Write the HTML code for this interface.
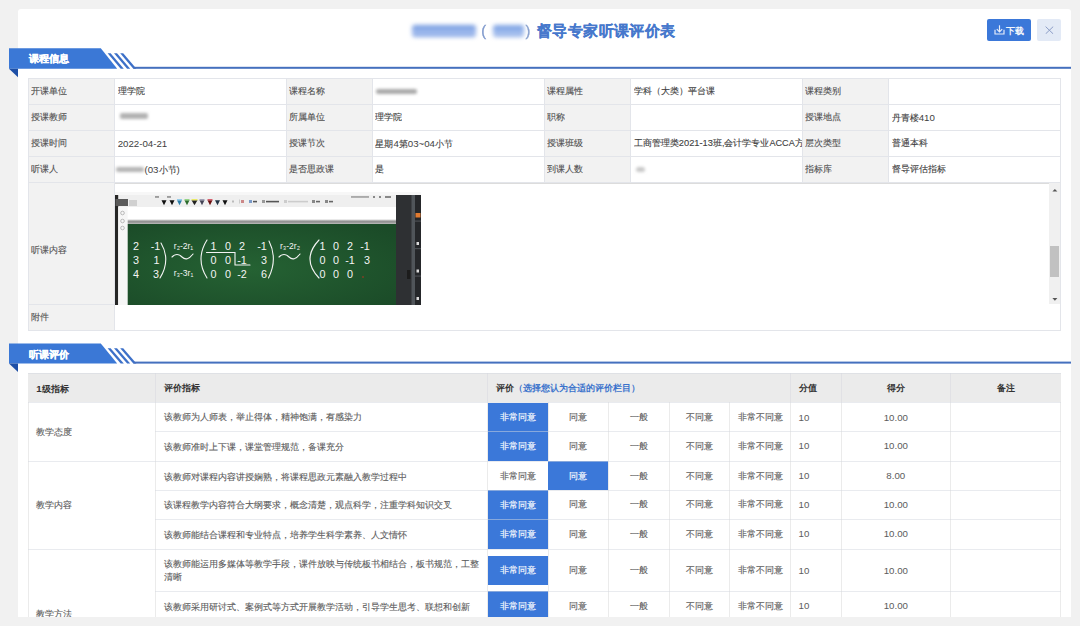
<!DOCTYPE html>
<html><head><meta charset="utf-8">
<style>
*{box-sizing:border-box;margin:0;padding:0}
html,body{width:1080px;height:626px;overflow:hidden;background:#f1f1f1;font-family:"Liberation Sans",sans-serif;}
#wrap{position:absolute;left:0;top:0;width:1080px;height:617px;overflow:hidden}
#panel{position:absolute;left:18px;top:9px;width:1053px;height:620px;background:#fff;border-radius:3px 3px 0 0}
.abs{position:absolute}
.t{position:absolute;white-space:nowrap;font-size:9px;-webkit-text-stroke:0.12px currentColor}
#title{left:537px;top:20px;font-size:15.4px;letter-spacing:0.38px;font-weight:bold;color:#4678cc;height:22px;line-height:22px}
.blur{display:inline-block;vertical-align:middle;filter:blur(1.6px);border-radius:4px}
#dl{position:absolute;left:987px;top:19px;width:44px;height:21.5px;background:#3b78d9;border-radius:2px;color:#fff;font-size:10px;font-weight:bold;line-height:21.5px}
#cls{position:absolute;left:1037px;top:19px;width:23.5px;height:21.5px;background:#e3eaf6;border-radius:2px}
.banner{position:absolute;left:0;width:1071px;height:30px}
.banner .txt{position:absolute;left:28.5px;top:4px;color:#fff;font-weight:bold;font-size:9.5px;line-height:14px;white-space:nowrap;-webkit-text-stroke:0.3px #fff}
table{border-collapse:collapse;table-layout:fixed;position:absolute}
td,th{border:1px solid #e4e6ec;font-size:9px;color:#555;overflow:hidden;white-space:nowrap;font-weight:normal}
#info td{padding:0 0 0 3px;}
#info td.l{background:#f2f2f2}
#eval td,#eval th{border-color:#ebebeb}
#eval th{background:#ebebeb;font-weight:bold;color:#333;text-align:left;padding-left:8px}
#eval td{color:#666;padding-left:8px}
#eval td.o{padding:0;text-align:center}
#eval td.sel{background:#3b78d9;color:#fff}
</style></head><body>
<div id="wrap">
  <div id="panel"></div>
  <div class="abs" style="left:412px;top:24.8px;width:64px;height:12px;background:linear-gradient(#6f97de,#93b1ea 45%,#a9c1ef 65%,#7a9ee2);filter:blur(1.9px);border-radius:3px"></div>
  <div class="abs" style="left:493px;top:24.8px;width:31px;height:12px;background:linear-gradient(#7a9fe2,#8fb0ea 45%,#b1c7f0 70%,#84a5e4);filter:blur(1.9px);border-radius:3px"></div>
  <div class="t" style="left:481.2px;top:21.5px;font-size:14.5px;line-height:18px;color:#7f99cc;-webkit-text-stroke:0.35px #7f99cc;filter:blur(0.3px)">(</div>
  <div class="t" style="left:525.6px;top:21.5px;font-size:14.5px;line-height:18px;color:#8aa2cf;-webkit-text-stroke:0.35px #8aa2cf;filter:blur(0.3px)">)</div>
  <div id="title" class="t">督导专家听课评价表</div>
  <div id="dl"><svg class="abs" style="left:7px;top:6px" width="11" height="10" viewBox="0 0 11 10"><path d="M1,4.8V9H10V4.8" fill="none" stroke="#e8eefa" stroke-width="1.15"/><path d="M5.5,0.3V6.6" stroke="#e8eefa" stroke-width="1.15"/><path d="M2.8,4.2L5.5,7L8.2,4.2" fill="none" stroke="#e8eefa" stroke-width="1.15"/></svg><span class="t" style="left:19px;top:1.5px;font-size:9px;line-height:21.5px;font-weight:bold;color:#f4f7fc;-webkit-text-stroke:0">下载</span></div>
  <div id="cls"><svg class="abs" style="left:7.5px;top:6.5px" width="9" height="8.5" viewBox="0 0 9 8.5"><path d="M0.6,0.6L8.2,7.9M8.2,0.6L0.6,7.9" stroke="#8c9dc6" stroke-width="1"/></svg></div>

  <!-- banner 1 -->
  <div class="banner" style="top:48px">
    <svg width="1071" height="30" style="position:absolute;left:0;top:0">
      <polygon points="9,0.3 100.8,0.3 117.2,20.75 9,20.75" fill="#3b78d6"/>
      <polygon points="9,20.75 18,20.75 18,29.2" fill="#1e4fa6"/>
      <polygon points="107.6,5.3 110.6,5.3 123.8,20.75 120.7,20.75" fill="#3d70c8"/>
      <polygon points="114,5.3 117,5.3 130.2,20.75 127.1,20.75" fill="#3d70c8"/>
      <polygon points="120.2,5.3 123.2,5.3 136.4,20.75 133.3,20.75" fill="#3d70c8"/>
      <rect x="133.5" y="18.8" width="939" height="2" fill="#4570be"/>
    </svg>
    <div class="txt">课程信息</div>
  </div>

  <!-- banner 2 -->
  <div class="banner" style="top:343px">
    <svg width="1071" height="30" style="position:absolute;left:0;top:0">
      <polygon points="9,0.6 100.8,0.6 117.2,20.6 9,20.6" fill="#3b78d6"/>
      <polygon points="9,20.6 18,20.6 18,29" fill="#1e4fa6"/>
      <polygon points="107.6,5.3 110.6,5.3 123.8,20.6 120.7,20.6" fill="#3d70c8"/>
      <polygon points="114,5.3 117,5.3 130.2,20.6 127.1,20.6" fill="#3d70c8"/>
      <polygon points="120.2,5.3 123.2,5.3 136.4,20.6 133.3,20.6" fill="#3d70c8"/>
      <rect x="133.5" y="18.6" width="939" height="2" fill="#4570be"/>
    </svg>
    <div class="txt" style="top:4.5px">听课评价</div>
  </div>

  <!-- INFO TABLE -->
<div class="abs" style="left:27.8px;top:77.5px;width:86.4px;height:26.299999999999997px;background:#f2f2f2"></div>
<div class="abs" style="left:285.6px;top:77.5px;width:86.29999999999995px;height:26.299999999999997px;background:#f2f2f2"></div>
<div class="abs" style="left:543.6px;top:77.5px;width:86.69999999999993px;height:26.299999999999997px;background:#f2f2f2"></div>
<div class="abs" style="left:801.7px;top:77.5px;width:86.5px;height:26.299999999999997px;background:#f2f2f2"></div>
<div class="abs" style="left:27.8px;top:103.8px;width:86.4px;height:26.000000000000014px;background:#f2f2f2"></div>
<div class="abs" style="left:285.6px;top:103.8px;width:86.29999999999995px;height:26.000000000000014px;background:#f2f2f2"></div>
<div class="abs" style="left:543.6px;top:103.8px;width:86.69999999999993px;height:26.000000000000014px;background:#f2f2f2"></div>
<div class="abs" style="left:801.7px;top:103.8px;width:86.5px;height:26.000000000000014px;background:#f2f2f2"></div>
<div class="abs" style="left:27.8px;top:129.8px;width:86.4px;height:26.0px;background:#f2f2f2"></div>
<div class="abs" style="left:285.6px;top:129.8px;width:86.29999999999995px;height:26.0px;background:#f2f2f2"></div>
<div class="abs" style="left:543.6px;top:129.8px;width:86.69999999999993px;height:26.0px;background:#f2f2f2"></div>
<div class="abs" style="left:801.7px;top:129.8px;width:86.5px;height:26.0px;background:#f2f2f2"></div>
<div class="abs" style="left:27.8px;top:155.8px;width:86.4px;height:26.0px;background:#f2f2f2"></div>
<div class="abs" style="left:285.6px;top:155.8px;width:86.29999999999995px;height:26.0px;background:#f2f2f2"></div>
<div class="abs" style="left:543.6px;top:155.8px;width:86.69999999999993px;height:26.0px;background:#f2f2f2"></div>
<div class="abs" style="left:801.7px;top:155.8px;width:86.5px;height:26.0px;background:#f2f2f2"></div>
<div class="abs" style="left:27.8px;top:181.8px;width:86.4px;height:122.09999999999997px;background:#f2f2f2"></div>
<div class="abs" style="left:27.8px;top:303.9px;width:86.4px;height:26.100000000000023px;background:#f2f2f2"></div>
<div class="abs" style="left:27.8px;top:77.5px;width:1033.0px;height:1px;background:#e3e5ea"></div>
<div class="abs" style="left:27.8px;top:103.8px;width:1033.0px;height:1px;background:#e3e5ea"></div>
<div class="abs" style="left:27.8px;top:129.8px;width:1033.0px;height:1px;background:#e3e5ea"></div>
<div class="abs" style="left:27.8px;top:155.8px;width:1033.0px;height:1px;background:#e3e5ea"></div>
<div class="abs" style="left:27.8px;top:181.8px;width:1033.0px;height:1px;background:#e3e5ea"></div>
<div class="abs" style="left:27.8px;top:303.9px;width:87.4px;height:1px;background:#e3e5ea"></div>
<div class="abs" style="left:27.8px;top:330.0px;width:1033.0px;height:1px;background:#e3e5ea"></div>
<div class="abs" style="left:27.8px;top:77.5px;width:1px;height:253.5px;background:#e3e5ea"></div>
<div class="abs" style="left:114.2px;top:77.5px;width:1px;height:253.5px;background:#e3e5ea"></div>
<div class="abs" style="left:285.6px;top:77.5px;width:1px;height:104.30000000000001px;background:#e3e5ea"></div>
<div class="abs" style="left:371.9px;top:77.5px;width:1px;height:104.30000000000001px;background:#e3e5ea"></div>
<div class="abs" style="left:543.6px;top:77.5px;width:1px;height:104.30000000000001px;background:#e3e5ea"></div>
<div class="abs" style="left:630.3px;top:77.5px;width:1px;height:104.30000000000001px;background:#e3e5ea"></div>
<div class="abs" style="left:801.7px;top:77.5px;width:1px;height:104.30000000000001px;background:#e3e5ea"></div>
<div class="abs" style="left:888.2px;top:77.5px;width:1px;height:104.30000000000001px;background:#e3e5ea"></div>
<div class="abs" style="left:1059.8px;top:77.5px;width:1px;height:253.5px;background:#e3e5ea"></div>
<div class="t" style="left:31.3px;top:79px;height:25.299999999999997px;line-height:25.299999999999997px;color:#505050;max-width:82.9px;overflow:hidden">开课单位</div>
<div class="t" style="left:117.7px;top:79px;height:25.299999999999997px;line-height:25.299999999999997px;color:#3e3e3e;max-width:167.90000000000003px;overflow:hidden">理学院</div>
<div class="t" style="left:289.1px;top:79px;height:25.299999999999997px;line-height:25.299999999999997px;color:#505050;max-width:82.79999999999995px;overflow:hidden">课程名称</div>
<div class="abs" style="left:375.5px;top:88.5px;width:41px;height:5.5px;background:#aaaaaa;filter:blur(1.5px);border-radius:2px"></div>
<div class="t" style="left:547.1px;top:79px;height:25.299999999999997px;line-height:25.299999999999997px;color:#505050;max-width:83.19999999999993px;overflow:hidden">课程属性</div>
<div class="t" style="left:633.8px;top:79px;height:25.299999999999997px;line-height:25.299999999999997px;color:#3e3e3e;max-width:167.9000000000001px;overflow:hidden">学科（大类）平台课</div>
<div class="t" style="left:805.2px;top:79px;height:25.299999999999997px;line-height:25.299999999999997px;color:#505050;max-width:83.0px;overflow:hidden">课程类别</div>
<div class="t" style="left:31.3px;top:105.3px;height:25.000000000000014px;line-height:25.000000000000014px;color:#505050;max-width:82.9px;overflow:hidden">授课教师</div>
<div class="abs" style="left:119.5px;top:113.3px;width:28px;height:5.5px;background:#b2b2b2;filter:blur(1.5px);border-radius:2px"></div>
<div class="t" style="left:289.1px;top:105.3px;height:25.000000000000014px;line-height:25.000000000000014px;color:#505050;max-width:82.79999999999995px;overflow:hidden">所属单位</div>
<div class="t" style="left:375.4px;top:105.3px;height:25.000000000000014px;line-height:25.000000000000014px;color:#3e3e3e;max-width:168.20000000000005px;overflow:hidden">理学院</div>
<div class="t" style="left:547.1px;top:105.3px;height:25.000000000000014px;line-height:25.000000000000014px;color:#505050;max-width:83.19999999999993px;overflow:hidden">职称</div>
<div class="t" style="left:805.2px;top:105.3px;height:25.000000000000014px;line-height:25.000000000000014px;color:#505050;max-width:83.0px;overflow:hidden">授课地点</div>
<div class="t" style="left:891.7px;top:105.3px;height:25.000000000000014px;line-height:25.000000000000014px;color:#3e3e3e;max-width:168.0999999999999px;overflow:hidden">丹青楼<span style="font-size:9.7px;-webkit-text-stroke:0">410</span></div>
<div class="t" style="left:31.3px;top:131.3px;height:25.0px;line-height:25.0px;color:#505050;max-width:82.9px;overflow:hidden">授课时间</div>
<div class="t" style="left:117.7px;top:131.3px;height:25.0px;line-height:25.0px;color:#3e3e3e;max-width:167.90000000000003px;overflow:hidden"><span style="font-size:9.7px;-webkit-text-stroke:0">2022-04-21</span></div>
<div class="t" style="left:289.1px;top:131.3px;height:25.0px;line-height:25.0px;color:#505050;max-width:82.79999999999995px;overflow:hidden">授课节次</div>
<div class="t" style="left:375.4px;top:131.3px;height:25.0px;line-height:25.0px;color:#3e3e3e;max-width:168.20000000000005px;overflow:hidden">星期<span style="font-size:9.7px;-webkit-text-stroke:0">4</span>第<span style="font-size:9.7px;-webkit-text-stroke:0">03~04</span>小节</div>
<div class="t" style="left:547.1px;top:131.3px;height:25.0px;line-height:25.0px;color:#505050;max-width:83.19999999999993px;overflow:hidden">授课班级</div>
<div class="t" style="left:633.8px;top:131.3px;height:25.0px;line-height:25.0px;color:#3e3e3e;max-width:167.9000000000001px;overflow:hidden">工商管理类<span style="font-size:9.3px">2021-13</span>班,会计学专业<span style="font-size:9.1px">ACCA</span>方</div>
<div class="t" style="left:805.2px;top:131.3px;height:25.0px;line-height:25.0px;color:#505050;max-width:83.0px;overflow:hidden">层次类型</div>
<div class="t" style="left:891.7px;top:131.3px;height:25.0px;line-height:25.0px;color:#3e3e3e;max-width:168.0999999999999px;overflow:hidden">普通本科</div>
<div class="t" style="left:31.3px;top:157.3px;height:25.0px;line-height:25.0px;color:#505050;max-width:82.9px;overflow:hidden">听课人</div>
<div class="abs" style="left:116.0px;top:166.5px;width:28px;height:5.5px;background:#b4b4b4;filter:blur(1.4px);border-radius:2px"></div>
<div class="t" style="left:144.5px;top:157.3px;height:25.0px;line-height:25.0px;color:#3e3e3e"><span style="font-size:9.7px;-webkit-text-stroke:0">(03</span>小节<span style="font-size:9.7px;-webkit-text-stroke:0">)</span></div>
<div class="t" style="left:289.1px;top:157.3px;height:25.0px;line-height:25.0px;color:#505050;max-width:82.79999999999995px;overflow:hidden">是否思政课</div>
<div class="t" style="left:375.4px;top:157.3px;height:25.0px;line-height:25.0px;color:#3e3e3e;max-width:168.20000000000005px;overflow:hidden">是</div>
<div class="t" style="left:547.1px;top:157.3px;height:25.0px;line-height:25.0px;color:#505050;max-width:83.19999999999993px;overflow:hidden">到课人数</div>
<div class="abs" style="left:636.0px;top:166.5px;width:8.5px;height:5.5px;background:#c8c8c8;filter:blur(1.6px);border-radius:3px"></div>
<div class="t" style="left:805.2px;top:157.3px;height:25.0px;line-height:25.0px;color:#505050;max-width:83.0px;overflow:hidden">指标库</div>
<div class="t" style="left:891.7px;top:157.3px;height:25.0px;line-height:25.0px;color:#3e3e3e;max-width:168.0999999999999px;overflow:hidden">督导评估指标</div>
<div class="t" style="left:31.3px;top:189.5px;height:121.09999999999997px;line-height:121.09999999999997px;color:#555">听课内容</div>
<div class="t" style="left:31.3px;top:305.4px;height:25.100000000000023px;line-height:25.100000000000023px;color:#555">附件</div>
<div class="abs" style="left:115.2px;top:182.7px;width:944.5999999999999px;height:1px;background:#dcdcdc"></div>
<div class="abs" style="left:1048.8px;top:183.1px;width:11px;height:120.8px;background:#f0f0f0"></div>
<svg class="abs" style="left:1049px;top:186px" width="12" height="118"><path d="M3.4,5.6H8.4L5.9,2.9z" fill="#555"/><path d="M3.4,112H8.4L5.9,114.7z" fill="#555"/></svg>
<div class="abs" style="left:1049.8px;top:245.5px;width:9px;height:31px;background:#c1c1c1"></div>
<svg class="abs" style="left:114.5px;top:192px" width="306" height="113" viewBox="0 0 306 113">
<defs>
<radialGradient id="gb" cx="0.45" cy="0.55" r="0.7">
<stop offset="0" stop-color="#256233"/><stop offset="1" stop-color="#1b4b28"/></radialGradient>
<linearGradient id="bar" x1="0" y1="0" x2="0" y2="1"><stop offset="0" stop-color="#d8d8d8"/><stop offset="0.5" stop-color="#8a8a8a"/><stop offset="1" stop-color="#bdbdbd"/></linearGradient>
</defs>
<rect x="0" y="0" width="307" height="113" fill="#f7f7f7"/>
<rect x="0" y="3" width="281" height="12" fill="#efefef"/>
<rect x="0" y="3" width="3.2" height="110" fill="#262626"/>
<rect x="0.5" y="7" width="12.5" height="7" fill="#5a5a5a"/>
<rect x="14" y="8" width="8" height="6" fill="#d0d0d0"/>
<g fill="#111" transform="translate(0,1.8)">
<path d="M46.5,6.5h5l-2.5,5z"/><path d="M54.5,6.5h5l-2.5,5z"/><path d="M62,6.5h5l-2.5,5z" fill="#2a7da8"/><path d="M69.5,6.5h5l-2.5,5z" fill="#2c6b2c"/><path d="M76.5,6.5h6l-3,5z" fill="#222"/><path d="M84.5,6.5h5l-2.5,5z" fill="#445"/><path d="M92.5,6.5h5l-2.5,5z" fill="#6a1010"/><path d="M100,6.5h5l-2.5,5z" fill="#234"/><path d="M107.5,6.5h5l-2.5,5z"/>
<rect x="76.5" y="5.3" width="6" height="1.3" fill="#e8e85a"/>
<rect x="62" y="5.3" width="5" height="1.3" fill="#8cc8e8"/>
<rect x="69.5" y="5.3" width="5" height="1.3" fill="#8ad07a"/>
<rect x="84.5" y="5.3" width="5" height="1.3" fill="#9a9ab0"/>
<rect x="92.5" y="5.3" width="5" height="1.3" fill="#d05060"/>
</g>
<g fill="#888"><rect x="40" y="4.2" width="4" height="1.5"/><rect x="52" y="4.2" width="4" height="1.5"/><rect x="117" y="8.5" width="2" height="2" fill="#bbb"/><rect x="124" y="7.5" width="1" height="4" fill="#ccc"/><rect x="126" y="8" width="3" height="3" fill="#c88"/><rect x="134" y="8" width="3" height="3" fill="#7a9ac8"/><rect x="138" y="8.8" width="4" height="1.6" fill="#555"/><rect x="147" y="8" width="3" height="3" fill="#999"/><rect x="151" y="8.8" width="13" height="1.6" fill="#555"/><rect x="169" y="8" width="3" height="3" fill="#ccc"/><rect x="173" y="8.8" width="20" height="1.6" fill="#ccc"/><rect x="197" y="8" width="3" height="3" fill="#888"/><rect x="201" y="8.8" width="4" height="1.6" fill="#666"/><rect x="210" y="8" width="3" height="3" fill="#888"/><rect x="214" y="8.8" width="4" height="1.6" fill="#666"/>
<rect x="236" y="4.2" width="18" height="1.5" fill="#999"/><rect x="258" y="4" width="2" height="2"/><rect x="264" y="4" width="2" height="2"/><rect x="270" y="4" width="6" height="2"/></g>
<rect x="3.2" y="15" width="9.5" height="98" fill="#f6f6f6"/>
<g fill="none" stroke="#aaa" stroke-width="0.8"><circle cx="7.5" cy="21" r="1.8"/><circle cx="7.5" cy="29" r="1.8"/><circle cx="7.5" cy="36" r="1.8"/></g>
<rect x="12.7" y="15" width="268.3" height="12.5" fill="#ffffff"/>
<rect x="12.7" y="27.5" width="268.3" height="4.5" fill="url(#bar)"/>
<rect x="12.7" y="32" width="268.3" height="81" fill="url(#gb)"/>
<rect x="281" y="3" width="26" height="110" fill="#2e3033"/>
<rect x="296.5" y="3" width="3.5" height="110" fill="#50555a"/>
<rect x="300" y="3" width="7" height="110" fill="#25272a"/>
<g fill="#4a4e52"><rect x="300" y="28.5" width="7" height="1.2"/><rect x="300" y="56" width="7" height="1.2"/><rect x="300" y="83.5" width="7" height="1.2"/></g>
<rect x="300.5" y="21" width="5" height="4.5" fill="#e07a30"/>
<g fill="#ddd"><rect x="301.5" y="50" width="2.5" height="3"/><rect x="301.5" y="77.5" width="2.5" height="3"/><rect x="301.5" y="105" width="2.5" height="3"/></g>
<rect x="292" y="78" width="3.5" height="9" fill="#1c1c1c"/>
<g fill="#f4f4f4" font-family="Liberation Sans" font-size="10.8" text-anchor="middle">
<text x="21" y="57.5">2</text><text x="40.5" y="57.5">-1</text>
<text x="21" y="71.8">3</text><text x="41.5" y="71.8">1</text>
<text x="21" y="86">4</text><text x="41" y="86">3</text>
<text x="98.5" y="57.5">1</text><text x="113" y="57.5">0</text><text x="127" y="57.5">2</text><text x="147" y="57.5">-1</text>
<text x="98.5" y="71.8">0</text><text x="113" y="71.8">0</text><text x="127" y="71.8">-1</text><text x="149" y="71.8">3</text>
<text x="98.5" y="86">0</text><text x="113" y="86">0</text><text x="127" y="86">-2</text><text x="149" y="86">6</text>
<text x="207.5" y="57.5">1</text><text x="221" y="57.5">0</text><text x="235" y="57.5">2</text><text x="250" y="57.5">-1</text>
<text x="207.5" y="71.8">0</text><text x="221" y="71.8">0</text><text x="235" y="71.8">-1</text><text x="252" y="71.8">3</text>
<text x="207.5" y="86">0</text><text x="221" y="86">0</text><text x="235" y="86">0</text>
</g>
<g fill="#f4f4f4" font-family="Liberation Sans" font-size="8.5" text-anchor="middle">
<text x="68.5" y="57">r₂-2r₁</text><text x="68.5" y="84">r₃-3r₁</text><text x="175" y="57">r₃-2r₂</text>
</g>
<g fill="none" stroke="#f4f4f4" stroke-width="1.1" stroke-linecap="round">
<path d="M46,51 Q56,68 45,86"/>
<path d="M92,48 Q80,67 92,86"/>
<path d="M154,49 Q163,67 153.5,86"/>
<path d="M204,48 Q186,67 204,86"/>
<path d="M57,65 q5,-5 10,0 q5,5 11,-3"/>
<path d="M164,65 q5,-5 10,0 q5,5 11,-3"/>
<path d="M91.5,60.5 H120 V73 H135"/>
</g>
<circle cx="248" cy="85" r="0.8" fill="#c03020"/>
</svg>

<!-- EVAL TABLE -->
<div class="abs" style="left:27.8px;top:372.5px;width:1032.5px;height:29.69999999999999px;background:#ebebeb"></div>
<div class="abs" style="left:27.8px;top:372.5px;width:1px;height:277px;background:#ebebeb"></div>
<div class="abs" style="left:154.8px;top:372.5px;width:1px;height:277px;background:#ebebeb"></div>
<div class="abs" style="left:487.0px;top:372.5px;width:1px;height:277px;background:#ebebeb"></div>
<div class="abs" style="left:547.5px;top:402.2px;width:1px;height:247.3px;background:#ebebeb"></div>
<div class="abs" style="left:607.8px;top:402.2px;width:1px;height:247.3px;background:#ebebeb"></div>
<div class="abs" style="left:668.5px;top:402.2px;width:1px;height:247.3px;background:#ebebeb"></div>
<div class="abs" style="left:729.0px;top:402.2px;width:1px;height:247.3px;background:#ebebeb"></div>
<div class="abs" style="left:790.0px;top:372.5px;width:1px;height:277px;background:#ebebeb"></div>
<div class="abs" style="left:840.8px;top:372.5px;width:1px;height:277px;background:#ebebeb"></div>
<div class="abs" style="left:949.8px;top:372.5px;width:1px;height:277px;background:#ebebeb"></div>
<div class="abs" style="left:1060.3px;top:372.5px;width:1px;height:277px;background:#ebebeb"></div>
<div class="abs" style="left:154.8px;top:372.5px;width:1px;height:29.69999999999999px;background:#e1e1e5"></div>
<div class="abs" style="left:487.0px;top:372.5px;width:1px;height:29.69999999999999px;background:#e1e1e5"></div>
<div class="abs" style="left:790.0px;top:372.5px;width:1px;height:29.69999999999999px;background:#e1e1e5"></div>
<div class="abs" style="left:840.8px;top:372.5px;width:1px;height:29.69999999999999px;background:#e1e1e5"></div>
<div class="abs" style="left:949.8px;top:372.5px;width:1px;height:29.69999999999999px;background:#e1e1e5"></div>
<div class="t" style="left:36.3px;top:374px;height:29.69999999999999px;line-height:29.69999999999999px;font-weight:bold;color:#333;-webkit-text-stroke:0"><span style="font-size:9.7px;-webkit-text-stroke:0">1</span>级指标</div>
<div class="t" style="left:164.1px;top:374px;height:29.69999999999999px;line-height:29.69999999999999px;font-weight:bold;color:#333;-webkit-text-stroke:0">评价指标</div>
<div class="t" style="left:495.8px;top:374px;height:29.69999999999999px;line-height:29.69999999999999px;font-weight:bold;color:#333;-webkit-text-stroke:0">评价<span style="color:#3b73cc;font-weight:bold">（选择您认为合适的评价栏目）</span></div>
<div class="t" style="left:798.5px;top:374px;height:29.69999999999999px;line-height:29.69999999999999px;font-weight:bold;color:#333;-webkit-text-stroke:0">分值</div>
<div class="t" style="left:841.3px;top:374px;height:29.69999999999999px;line-height:29.69999999999999px;font-weight:bold;color:#333;-webkit-text-stroke:0;width:109.0px;text-align:center">得分</div>
<div class="t" style="left:950.3px;top:374px;height:29.69999999999999px;line-height:29.69999999999999px;font-weight:bold;color:#333;-webkit-text-stroke:0;width:110.5px;text-align:center">备注</div>
<div class="t" style="left:36.3px;top:402.7px;height:58.30000000000001px;line-height:58.30000000000001px;color:#5c5c5c">教学态度</div>
<div class="t" style="left:36.3px;top:461.0px;height:88.0px;line-height:88.0px;color:#5c5c5c">教学内容</div>
<div class="t" style="left:36.3px;top:549.0px;height:131.0px;line-height:131.0px;color:#5c5c5c">教学方法</div>
<div class="t" style="left:164.3px;top:404.2px;height:27.600000000000023px;line-height:27.600000000000023px;color:#5c5c5c">该教师为人师表，举止得体，精神饱满，有感染力</div>
<div class="abs" style="left:487.5px;top:402.7px;width:60.5px;height:28.600000000000023px;background:#3b78d9"></div>
<div class="t" style="left:487.5px;top:403.2px;height:28.600000000000023px;line-height:28.600000000000023px;color:#fff;width:60.5px;text-align:center">非常同意</div>
<div class="t" style="left:548px;top:403.7px;height:27.600000000000023px;line-height:27.600000000000023px;color:#5c5c5c;width:60.299999999999955px;text-align:center">同意</div>
<div class="t" style="left:608.3px;top:403.7px;height:27.600000000000023px;line-height:27.600000000000023px;color:#5c5c5c;width:60.700000000000045px;text-align:center">一般</div>
<div class="t" style="left:669px;top:403.7px;height:27.600000000000023px;line-height:27.600000000000023px;color:#5c5c5c;width:60.5px;text-align:center">不同意</div>
<div class="t" style="left:729.5px;top:403.7px;height:27.600000000000023px;line-height:27.600000000000023px;color:#5c5c5c;width:61.0px;text-align:center">非常不同意</div>
<div class="t" style="left:798.5px;top:403.7px;height:27.600000000000023px;line-height:27.600000000000023px;color:#5c5c5c"><span style="font-size:9.7px;-webkit-text-stroke:0">10</span></div>
<div class="t" style="left:841.3px;top:403.7px;height:27.600000000000023px;line-height:27.600000000000023px;color:#5c5c5c;width:109.0px;text-align:center"><span style="font-size:9.7px;-webkit-text-stroke:0">10.00</span></div>
<div class="t" style="left:164.3px;top:432.8px;height:28.69999999999999px;line-height:28.69999999999999px;color:#5c5c5c">该教师准时上下课，课堂管理规范，备课充分</div>
<div class="abs" style="left:487.5px;top:431.3px;width:60.5px;height:29.69999999999999px;background:#3b78d9"></div>
<div class="t" style="left:487.5px;top:431.8px;height:29.69999999999999px;line-height:29.69999999999999px;color:#fff;width:60.5px;text-align:center">非常同意</div>
<div class="t" style="left:548px;top:432.3px;height:28.69999999999999px;line-height:28.69999999999999px;color:#5c5c5c;width:60.299999999999955px;text-align:center">同意</div>
<div class="t" style="left:608.3px;top:432.3px;height:28.69999999999999px;line-height:28.69999999999999px;color:#5c5c5c;width:60.700000000000045px;text-align:center">一般</div>
<div class="t" style="left:669px;top:432.3px;height:28.69999999999999px;line-height:28.69999999999999px;color:#5c5c5c;width:60.5px;text-align:center">不同意</div>
<div class="t" style="left:729.5px;top:432.3px;height:28.69999999999999px;line-height:28.69999999999999px;color:#5c5c5c;width:61.0px;text-align:center">非常不同意</div>
<div class="t" style="left:798.5px;top:432.3px;height:28.69999999999999px;line-height:28.69999999999999px;color:#5c5c5c"><span style="font-size:9.7px;-webkit-text-stroke:0">10</span></div>
<div class="t" style="left:841.3px;top:432.3px;height:28.69999999999999px;line-height:28.69999999999999px;color:#5c5c5c;width:109.0px;text-align:center"><span style="font-size:9.7px;-webkit-text-stroke:0">10.00</span></div>
<div class="t" style="left:164.3px;top:462.5px;height:28.30000000000001px;line-height:28.30000000000001px;color:#5c5c5c">该教师对课程内容讲授娴熟，将课程思政元素融入教学过程中</div>
<div class="t" style="left:487.5px;top:462.0px;height:28.30000000000001px;line-height:28.30000000000001px;color:#5c5c5c;width:60.5px;text-align:center">非常同意</div>
<div class="abs" style="left:548.0px;top:461.0px;width:60.299999999999955px;height:29.30000000000001px;background:#3b78d9"></div>
<div class="t" style="left:548px;top:461.5px;height:29.30000000000001px;line-height:29.30000000000001px;color:#fff;width:60.299999999999955px;text-align:center">同意</div>
<div class="t" style="left:608.3px;top:462.0px;height:28.30000000000001px;line-height:28.30000000000001px;color:#5c5c5c;width:60.700000000000045px;text-align:center">一般</div>
<div class="t" style="left:669px;top:462.0px;height:28.30000000000001px;line-height:28.30000000000001px;color:#5c5c5c;width:60.5px;text-align:center">不同意</div>
<div class="t" style="left:729.5px;top:462.0px;height:28.30000000000001px;line-height:28.30000000000001px;color:#5c5c5c;width:61.0px;text-align:center">非常不同意</div>
<div class="t" style="left:798.5px;top:462.0px;height:28.30000000000001px;line-height:28.30000000000001px;color:#5c5c5c"><span style="font-size:9.7px;-webkit-text-stroke:0">10</span></div>
<div class="t" style="left:841.3px;top:462.0px;height:28.30000000000001px;line-height:28.30000000000001px;color:#5c5c5c;width:109.0px;text-align:center"><span style="font-size:9.7px;-webkit-text-stroke:0">8.00</span></div>
<div class="t" style="left:164.3px;top:491.8px;height:27.900000000000034px;line-height:27.900000000000034px;color:#5c5c5c">该课程教学内容符合大纲要求，概念清楚，观点科学，注重学科知识交叉</div>
<div class="abs" style="left:487.5px;top:490.3px;width:60.5px;height:28.900000000000034px;background:#3b78d9"></div>
<div class="t" style="left:487.5px;top:490.8px;height:28.900000000000034px;line-height:28.900000000000034px;color:#fff;width:60.5px;text-align:center">非常同意</div>
<div class="t" style="left:548px;top:491.3px;height:27.900000000000034px;line-height:27.900000000000034px;color:#5c5c5c;width:60.299999999999955px;text-align:center">同意</div>
<div class="t" style="left:608.3px;top:491.3px;height:27.900000000000034px;line-height:27.900000000000034px;color:#5c5c5c;width:60.700000000000045px;text-align:center">一般</div>
<div class="t" style="left:669px;top:491.3px;height:27.900000000000034px;line-height:27.900000000000034px;color:#5c5c5c;width:60.5px;text-align:center">不同意</div>
<div class="t" style="left:729.5px;top:491.3px;height:27.900000000000034px;line-height:27.900000000000034px;color:#5c5c5c;width:61.0px;text-align:center">非常不同意</div>
<div class="t" style="left:798.5px;top:491.3px;height:27.900000000000034px;line-height:27.900000000000034px;color:#5c5c5c"><span style="font-size:9.7px;-webkit-text-stroke:0">10</span></div>
<div class="t" style="left:841.3px;top:491.3px;height:27.900000000000034px;line-height:27.900000000000034px;color:#5c5c5c;width:109.0px;text-align:center"><span style="font-size:9.7px;-webkit-text-stroke:0">10.00</span></div>
<div class="t" style="left:164.3px;top:520.7px;height:28.799999999999955px;line-height:28.799999999999955px;color:#5c5c5c">该教师能结合课程和专业特点，培养学生科学素养、人文情怀</div>
<div class="abs" style="left:487.5px;top:519.2px;width:60.5px;height:29.799999999999955px;background:#3b78d9"></div>
<div class="t" style="left:487.5px;top:519.7px;height:29.799999999999955px;line-height:29.799999999999955px;color:#fff;width:60.5px;text-align:center">非常同意</div>
<div class="t" style="left:548px;top:520.2px;height:28.799999999999955px;line-height:28.799999999999955px;color:#5c5c5c;width:60.299999999999955px;text-align:center">同意</div>
<div class="t" style="left:608.3px;top:520.2px;height:28.799999999999955px;line-height:28.799999999999955px;color:#5c5c5c;width:60.700000000000045px;text-align:center">一般</div>
<div class="t" style="left:669px;top:520.2px;height:28.799999999999955px;line-height:28.799999999999955px;color:#5c5c5c;width:60.5px;text-align:center">不同意</div>
<div class="t" style="left:729.5px;top:520.2px;height:28.799999999999955px;line-height:28.799999999999955px;color:#5c5c5c;width:61.0px;text-align:center">非常不同意</div>
<div class="t" style="left:798.5px;top:520.2px;height:28.799999999999955px;line-height:28.799999999999955px;color:#5c5c5c"><span style="font-size:9.7px;-webkit-text-stroke:0">10</span></div>
<div class="t" style="left:841.3px;top:520.2px;height:28.799999999999955px;line-height:28.799999999999955px;color:#5c5c5c;width:109.0px;text-align:center"><span style="font-size:9.7px;-webkit-text-stroke:0">10.00</span></div>
<div class="t" style="left:164.10000000000002px;top:550.5px;height:41.39999999999998px;line-height:13.5px;color:#5c5c5c;display:flex;align-items:center">该教师能运用多媒体等教学手段，课件放映与传统板书相结合，板书规范，工整<br>清晰</div>
<div class="abs" style="left:487.5px;top:555.8px;width:60.5px;height:28.8px;background:#3b78d9"></div>
<div class="t" style="left:487.5px;top:556.3px;height:28.8px;line-height:28.8px;color:#fff;width:60.5px;text-align:center">非常同意</div>
<div class="t" style="left:548px;top:550.0px;height:41.39999999999998px;line-height:41.39999999999998px;color:#5c5c5c;width:60.299999999999955px;text-align:center">同意</div>
<div class="t" style="left:608.3px;top:550.0px;height:41.39999999999998px;line-height:41.39999999999998px;color:#5c5c5c;width:60.700000000000045px;text-align:center">一般</div>
<div class="t" style="left:669px;top:550.0px;height:41.39999999999998px;line-height:41.39999999999998px;color:#5c5c5c;width:60.5px;text-align:center">不同意</div>
<div class="t" style="left:729.5px;top:550.0px;height:41.39999999999998px;line-height:41.39999999999998px;color:#5c5c5c;width:61.0px;text-align:center">非常不同意</div>
<div class="t" style="left:798.5px;top:550.0px;height:41.39999999999998px;line-height:41.39999999999998px;color:#5c5c5c"><span style="font-size:9.7px;-webkit-text-stroke:0">10</span></div>
<div class="t" style="left:841.3px;top:550.0px;height:41.39999999999998px;line-height:41.39999999999998px;color:#5c5c5c;width:109.0px;text-align:center"><span style="font-size:9.7px;-webkit-text-stroke:0">10.00</span></div>
<div class="t" style="left:164.3px;top:592.9px;height:28.200000000000045px;line-height:28.200000000000045px;color:#5c5c5c">该教师采用研讨式、案例式等方式开展教学活动，引导学生思考、联想和创新</div>
<div class="abs" style="left:487.5px;top:591.4px;width:60.5px;height:29.200000000000045px;background:#3b78d9"></div>
<div class="t" style="left:487.5px;top:591.9px;height:29.200000000000045px;line-height:29.200000000000045px;color:#fff;width:60.5px;text-align:center">非常同意</div>
<div class="t" style="left:548px;top:592.4px;height:28.200000000000045px;line-height:28.200000000000045px;color:#5c5c5c;width:60.299999999999955px;text-align:center">同意</div>
<div class="t" style="left:608.3px;top:592.4px;height:28.200000000000045px;line-height:28.200000000000045px;color:#5c5c5c;width:60.700000000000045px;text-align:center">一般</div>
<div class="t" style="left:669px;top:592.4px;height:28.200000000000045px;line-height:28.200000000000045px;color:#5c5c5c;width:60.5px;text-align:center">不同意</div>
<div class="t" style="left:729.5px;top:592.4px;height:28.200000000000045px;line-height:28.200000000000045px;color:#5c5c5c;width:61.0px;text-align:center">非常不同意</div>
<div class="t" style="left:798.5px;top:592.4px;height:28.200000000000045px;line-height:28.200000000000045px;color:#5c5c5c"><span style="font-size:9.7px;-webkit-text-stroke:0">10</span></div>
<div class="t" style="left:841.3px;top:592.4px;height:28.200000000000045px;line-height:28.200000000000045px;color:#5c5c5c;width:109.0px;text-align:center"><span style="font-size:9.7px;-webkit-text-stroke:0">10.00</span></div>
<div class="abs" style="left:487.5px;top:620.6px;width:60.5px;height:29.399999999999977px;background:#3b78d9"></div>
<div class="t" style="left:487.5px;top:621.1px;height:29.399999999999977px;line-height:29.399999999999977px;color:#fff;width:60.5px;text-align:center">非常同意</div>
<div class="t" style="left:548px;top:621.6px;height:28.399999999999977px;line-height:28.399999999999977px;color:#5c5c5c;width:60.299999999999955px;text-align:center">同意</div>
<div class="t" style="left:608.3px;top:621.6px;height:28.399999999999977px;line-height:28.399999999999977px;color:#5c5c5c;width:60.700000000000045px;text-align:center">一般</div>
<div class="t" style="left:669px;top:621.6px;height:28.399999999999977px;line-height:28.399999999999977px;color:#5c5c5c;width:60.5px;text-align:center">不同意</div>
<div class="t" style="left:729.5px;top:621.6px;height:28.399999999999977px;line-height:28.399999999999977px;color:#5c5c5c;width:61.0px;text-align:center">非常不同意</div>
<div class="t" style="left:798.5px;top:621.6px;height:28.399999999999977px;line-height:28.399999999999977px;color:#5c5c5c"><span style="font-size:9.7px;-webkit-text-stroke:0">10</span></div>
<div class="t" style="left:841.3px;top:621.6px;height:28.399999999999977px;line-height:28.399999999999977px;color:#5c5c5c;width:109.0px;text-align:center"><span style="font-size:9.7px;-webkit-text-stroke:0">10.00</span></div>
<div class="abs" style="left:27.8px;top:372.5px;width:1033.0px;height:1px;background:rgba(212,216,224,0.5)"></div>
<div class="abs" style="left:27.8px;top:402.2px;width:1033.0px;height:1px;background:rgba(212,216,224,0.5)"></div>
<div class="abs" style="left:154.8px;top:430.8px;width:906.0px;height:1px;background:rgba(212,216,224,0.5)"></div>
<div class="abs" style="left:27.8px;top:460.5px;width:1033.0px;height:1px;background:rgba(212,216,224,0.5)"></div>
<div class="abs" style="left:154.8px;top:489.8px;width:906.0px;height:1px;background:rgba(212,216,224,0.5)"></div>
<div class="abs" style="left:154.8px;top:518.7px;width:906.0px;height:1px;background:rgba(212,216,224,0.5)"></div>
<div class="abs" style="left:27.8px;top:548.5px;width:1033.0px;height:1px;background:rgba(212,216,224,0.5)"></div>
<div class="abs" style="left:154.8px;top:590.9px;width:906.0px;height:1px;background:rgba(212,216,224,0.5)"></div>
<div class="abs" style="left:154.8px;top:620.1px;width:906.0px;height:1px;background:rgba(212,216,224,0.5)"></div>
</div>
</body></html>
